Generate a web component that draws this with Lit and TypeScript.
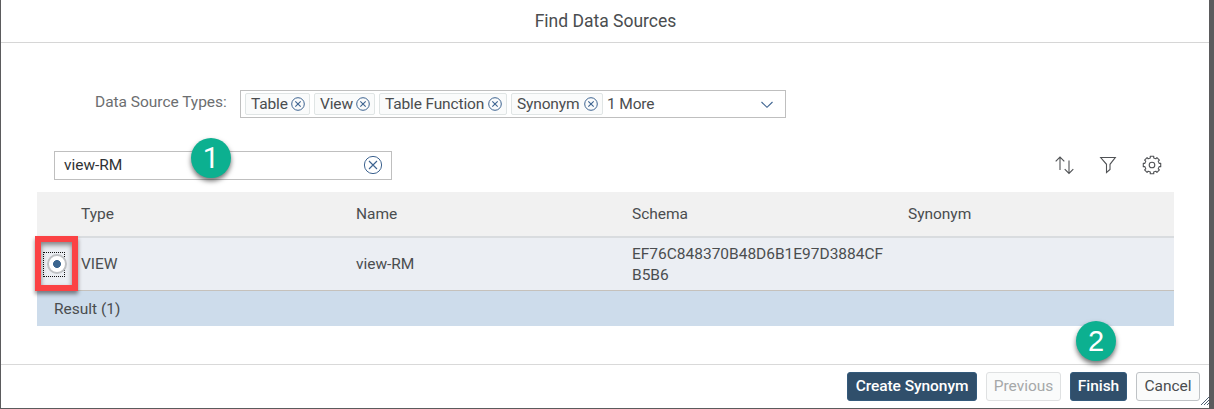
import { LitElement, html, css, svg } from "lit";
import { customElement } from "lit/decorators.js";

const gearPath = (() => {
  const teeth = 8;
  const step = (Math.PI * 2) / teeth;
  const at = (r: number, a: number) => `${(10 + r * Math.cos(a)).toFixed(2)} ${(10 + r * Math.sin(a)).toFixed(2)}`;
  let d = "";
  for (let i = 0; i < teeth; i++) {
    const a = i * step - Math.PI / 2;
    d += `${i ? "L" : "M"}${at(7.3, a - 0.23)}L${at(8.9, a - 0.2)}L${at(8.9, a + 0.2)}L${at(7.3, a + 0.23)}`;
  }
  return d + "Z";
})();

const clearIcon = (size: number, r: number, x: number) => html`<svg width=${size} height=${size} viewBox="0 0 ${size} ${size}" fill="none" stroke="#3d6390">
  ${svg`<circle cx=${size / 2} cy=${size / 2} r=${r}></circle><path d="M${size / 2 - x} ${size / 2 - x}l${2 * x} ${2 * x}m0 ${-2 * x}l${-2 * x} ${2 * x}" stroke-width="1.1"></path>`}
</svg>`;

@customElement("app-root")
export class AppRoot extends LitElement {
  static styles = css`
    :host {
      display: block;
      width: 1214px;
      height: 409px;
      overflow: hidden;
      background: #5b5b5d;
      font: 15.5px/21px Roboto, sans-serif;
      letter-spacing: -0.03px;
      color: #4a4d4f;
    }
    * { box-sizing: border-box; }
    svg { display: block; flex: none; }
    .dialog {
      position: relative;
      display: flex;
      flex-direction: column;
      width: 1208px;
      height: 408px;
      margin-left: 1px;
      background: #fff;
    }
    .title {
      height: 43px;
      border-bottom: 1px solid #d6d6d6;
      text-align: center;
      font-size: 17.5px;
      line-height: 42px;
      padding-left: 1px;
      letter-spacing: 0;
    }
    .types { display: flex; margin-top: 47px; height: 28px; }
    .label { width: 239px; padding-left: 94px; line-height: 24px; color: #6c6e70; }
    .combo {
      display: flex;
      align-items: center;
      width: 546px;
      padding: 0 10px 0 4px;
      border: 1px solid #bfbfbf;
      gap: 4px;
      letter-spacing: -0.15px;
    }
    .token {
      display: flex;
      align-items: center;
      justify-content: space-between;
      height: 22px;
      padding: 0 4px 0 5px;
      border: 1px solid #e0e5e5;
      border-radius: 2px;
      background: #fafbfb;
    }
    .t0 { width: 65px; }
    .t1 { width: 61px; }
    .t2 { width: 128px; }
    .t3 { width: 92px; }
    .more { flex: 1; }
    .tools { display: flex; margin-top: 33px; height: 29px; }
    .search {
      display: flex;
      align-items: center;
      justify-content: space-between;
      width: 338px;
      margin-left: 53px;
      padding: 0 8px 1px 9px;
      border: 1px solid #bfbfbf;
      color: #303234;
    }
    .search span { padding-top: 1px; }
    .icons { display: flex; gap: 24px; margin: 4px 0 0 662px; }
    .table { width: 1137px; margin: 12px 0 0 36px; }
    .row { display: grid; grid-template-columns: 44px 275px 276px 276px 1fr; align-items: center; }
    .head { height: 46px; background: #f1f1f1; border-bottom: 2px solid #d9dcdf; }
    .item { height: 53px; background: #ebeef3; border-bottom: 1px solid #c5c1bb; }
    .hash { width: 256px; word-break: break-all; padding-top: 1px; letter-spacing: -0.01px; }
    .result { height: 35px; padding-left: 17px; line-height: 36px; background: #cddceb; letter-spacing: 0; }
    .focus {
      display: flex;
      align-items: center;
      justify-content: center;
      width: 22px;
      height: 25px;
      margin-left: 6px;
      border: 1px dotted #111;
    }
    .radio {
      flex: none;
      width: 20px;
      height: 20px;
      margin-left: 5px;
      border: 2px solid #bfc1c4;
      border-radius: 50%;
      background: radial-gradient(circle, #3c6690 3.6px, #fff 4.3px);
    }
    .footer {
      display: flex;
      justify-content: flex-end;
      gap: 9px;
      height: 44px;
      margin-top: auto;
      padding: 7px 9px 0 0;
      border-top: 1px solid #d9d9d9;
    }
    .btn {
      height: 29px;
      border: 1px solid #bfc3c6;
      border-radius: 3px;
      text-align: center;
      line-height: 27px;
      background: #fafbfb;
      white-space: nowrap;
    }
    .primary { background: #304f6b; border-color: #345a7b; color: #fff; font-weight: 500; letter-spacing: -0.06px; }
    .off { border-color: #dfe1e2; color: #a6a8a9; }
    .create { width: 130px; }
    .prev { width: 75px; }
    .finish { width: 57px; }
    .cancel { width: 64px; }
    .grip { position: absolute; right: 0; bottom: 3px; }
    .mark {
      position: absolute;
      width: 40px;
      height: 40px;
      border-radius: 50%;
      background: #0cb090;
      box-shadow: 0 3px 5px rgba(0, 0, 0, 0.55);
      color: #fff;
      font: 29px/40px "Liberation Sans", sans-serif;
      letter-spacing: 0;
      text-align: center;
    }
    .one { left: 190px; top: 138px; font-family: Roboto, sans-serif; }
    .two { left: 1075px; top: 321px; }
    .frame {
      position: absolute;
      left: 34px;
      top: 236px;
      width: 43px;
      height: 55px;
      border: 6px solid #fb4244;
      box-shadow: 0 3px 4px rgba(0, 0, 0, 0.45), inset 0 3px 5px rgba(0, 0, 0, 0.45);
    }
  `;

  render() {
    return html`
      <div class="dialog">
        <div class="title">Find Data Sources</div>
        <div class="types">
          <div class="label">Data Source Types:</div>
          <div class="combo">
            ${["Table", "View", "Table Function", "Synonym"].map(
              (t, i) => html`<div class="token t${i}"><span>${t}</span>${clearIcon(14, 6.3, 2.7)}</div>`
            )}
            <span class="more">1 More</span>
            <svg width="16" height="14" viewBox="0 0 16 14" fill="none" stroke="#3d6390" stroke-width="1.1"><path d="M2.5 5L8 10.3L13.5 5"></path></svg>
          </div>
        </div>
        <div class="tools">
          <div class="search"><span>view-RM</span>${clearIcon(20, 8.6, 4)}</div>
          <div class="icons">
            <svg width="20" height="20" viewBox="0 0 20 20" fill="none" stroke="#505255" stroke-width="1.1"><path d="M6 15V2.3M1.7 6.3L6 2L10.3 6.3M15 5.5V18.2M10.7 14.2L15 18.5L19.3 14.2"></path></svg>
            <svg width="20" height="20" viewBox="0 0 20 20" fill="none" stroke="#505255" stroke-width="1.1"><path d="M2.7 2.5H17.3L12 9.3V14.5L8.5 17.5V9.3Z"></path></svg>
            <svg width="20" height="20" viewBox="0 0 20 20" fill="none" stroke="#505255" stroke-width="1.1" stroke-linejoin="round"><path d=${gearPath}></path><circle cx="10" cy="10" r="2.8"></circle></svg>
          </div>
        </div>
        <div class="table">
          <div class="row head"><span></span><span>Type</span><span>Name</span><span>Schema</span><span>Synonym</span></div>
          <div class="row item">
            <div class="focus"><div class="radio"></div></div>
            <span>VIEW</span><span>view-RM</span><span class="hash">EF76C848370B48D6B1E97D3884CFB5B6</span><span></span>
          </div>
          <div class="result">Result (1)</div>
        </div>
        <div class="footer">
          <div class="btn primary create">Create Synonym</div>
          <div class="btn off prev">Previous</div>
          <div class="btn primary finish">Finish</div>
          <div class="btn cancel">Cancel</div>
        </div>
        <svg class="grip" width="8" height="8" viewBox="0 0 8 8" stroke="#4d5f72"><path d="M0 8L8 0M3 8L8 3M6 8L8 6"></path></svg>
        <div class="frame"></div>
        <div class="mark one">1</div>
        <div class="mark two">2</div>
      </div>
    `;
  }
}
